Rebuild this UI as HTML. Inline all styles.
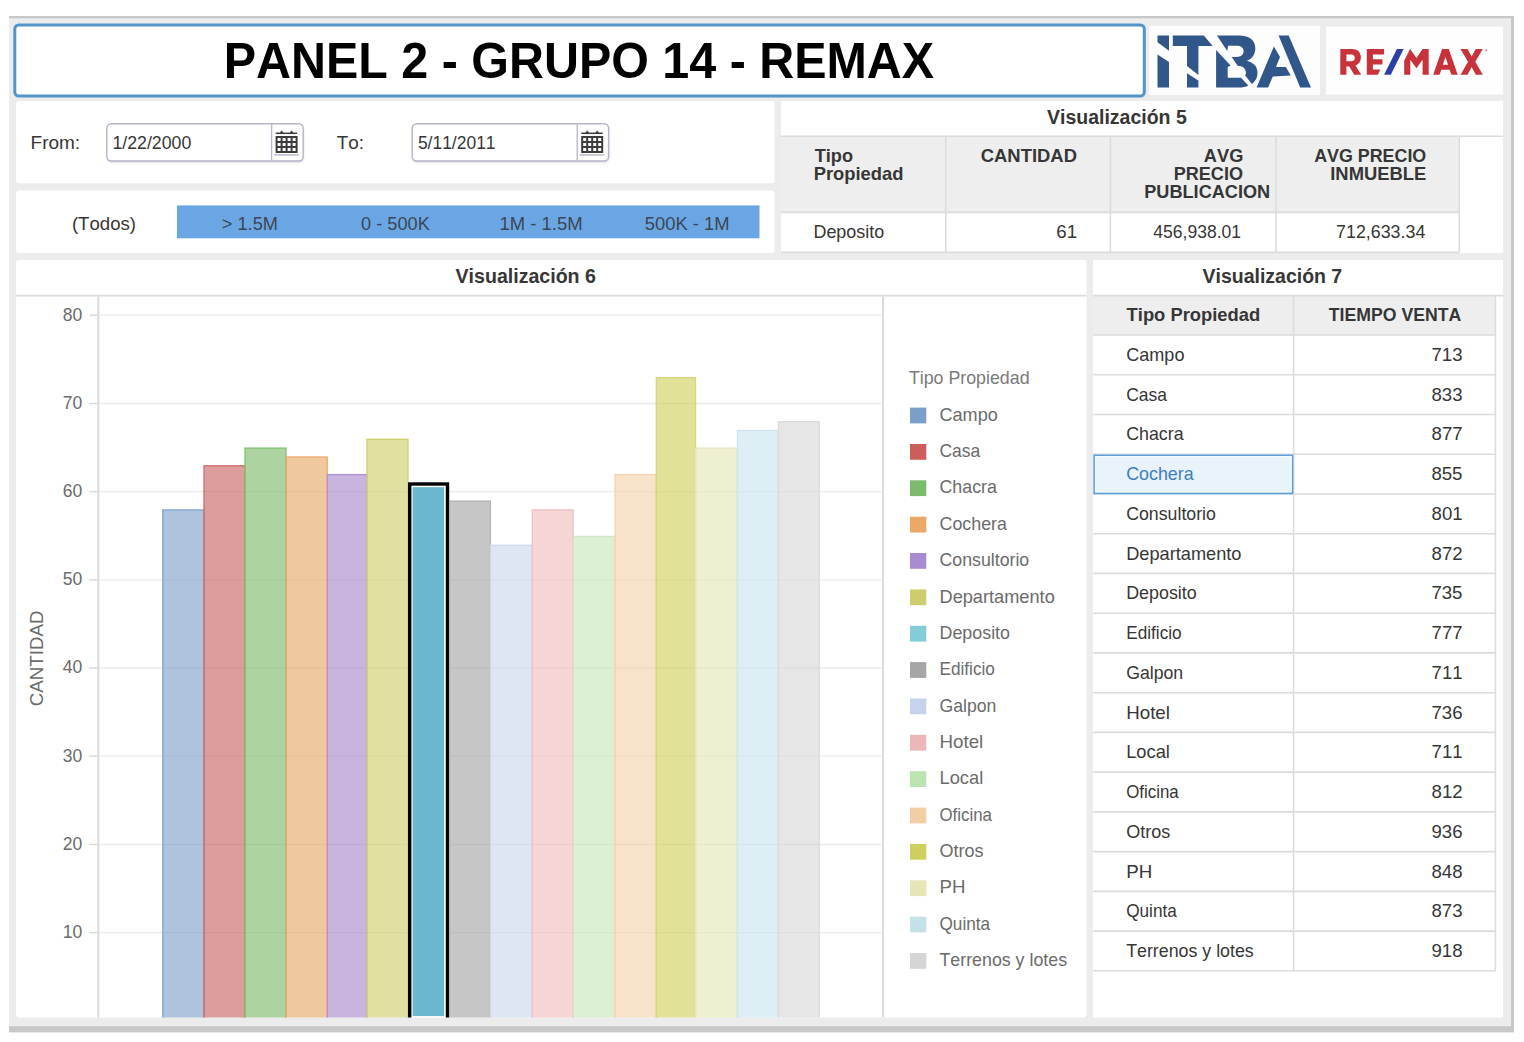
<!DOCTYPE html>
<html><head><meta charset="utf-8"><title>Panel 2 - Grupo 14 - REMAX</title>
<style>
html,body{margin:0;padding:0;background:#fff;}
body{width:1524px;height:1042px;overflow:hidden;font-family:"Liberation Sans",sans-serif;}
svg{display:block;position:absolute;left:0;top:0;}
svg text{font-family:"Liberation Sans",sans-serif;font-kerning:none;}
.b{font-weight:bold;}
</style></head><body>
<svg width="1524" height="1042" viewBox="0 0 1524 1042">
<defs><filter id="sh" x="-5%" y="-20%" width="110%" height="150%"><feGaussianBlur stdDeviation="1.2"/></filter></defs>
<rect x="9" y="16" width="1505" height="1016.4" fill="#c8c8c8"/>
<rect x="9" y="18.3" width="1502" height="1007.9" fill="#ececec"/>
<rect x="14.8" y="25" width="1129.5" height="71" rx="4" ry="4" fill="#fff" stroke="#5394ca" stroke-width="3"/>
<text class="b" x="223.76" y="78.30" font-size="50.2" fill="#000" textLength="710.37" lengthAdjust="spacingAndGlyphs">PANEL 2 - GRUPO 14 - REMAX</text>
<rect x="1149" y="26" width="171" height="69" fill="#fdfdfd"/>
<g fill="#31578a">
<path d="M1157.5 35.6H1169V50.8L1157.5 42.2Z"/>
<path d="M1157.5 54.6L1169 61.9V87.5H1157.5Z"/>
<path d="M1172.8 35.6H1203.8L1212.7 46H1172.8Z"/>
<path d="M1187 46H1198.4V74.9L1187 66Z"/>
<path d="M1187 73.3L1198.4 80.6V87.5H1187Z"/>
<path d="M1216.9 35.6H1238.9C1250 35.6 1255.3 41 1255.3 48.2C1255.3 54.5 1252 58.8 1246.8 60.8C1253.5 62.5 1257.5 66.5 1257.5 72.7C1257.5 77.5 1255.5 81.2 1251.9 83.9L1245 75.3C1246 74.3 1246.2 72.8 1245.7 71.3C1245 68 1242.5 65.9 1238.9 65.9H1237.8L1231.7 56.9H1236.7C1241 56.9 1243.6 54.8 1243.6 51.1C1243.6 47.6 1241 45.7 1236.7 45.7H1228L1227.3 51.1Z"/>
<path d="M1216.1 50L1230.6 65.5L1227.7 67V77.8H1241L1248.3 85.4C1245.8 86.8 1242.5 87.5 1238.9 87.5H1216.1Z"/>
<path d="M1273.9 46.4L1280 56.9L1276 67H1285.8L1290.8 75.6L1272.8 76.4L1268.1 87.5H1256.6Z"/>
<path d="M1278.6 35.6H1288.7L1311 87.5H1300.2Z"/>
</g>
<rect x="1326" y="26.7" width="177" height="68" fill="#fefefe"/>
<g fill="#c8323a">
<path fill-rule="evenodd" transform="translate(1340.3 49.1)" d="M0 0H11.5C17.3 0 20.6 3.4 20.6 8.5C20.6 12.4 18.5 15.2 15.2 16.4L20.9 25.7H13.9L9 17.3H6.1V25.7H0ZM6.1 5.3V12.1H11.2C13.3 12.1 14.5 10.7 14.5 8.7C14.5 6.6 13.3 5.3 11.2 5.3Z"/>
<path transform="translate(1366.8 49.1)" d="M0 0H17.3V5.4H6.1V10.2H15.6V15.4H6.1V20.3H13.5L11 25.7H0Z"/>
<path transform="translate(1404.2 49.1)" d="M5.9 0L12.3 9L18.4 0H24.5V25.7H18.4V10.6L12.3 19.2L6.1 10.6V25.7H0V11.5Z"/>
<path fill-rule="evenodd" transform="translate(1433.2 49.1)" d="M8.9 0H15.6L24.5 25.7H18.2L16.4 20.6H8.1L6.3 25.7H0ZM12.25 8L9.6 15.6H14.9Z"/>
<path transform="translate(1460.5 49.1)" d="M0 0H7L11.15 7.5L15.3 0H22.3L14.8 12.6L22.3 25.7H15.3L11.15 17.9L7 25.7H0L7.5 12.6Z"/>
<circle cx="1486.2" cy="50.3" r="1.1" fill="#d98a8e"/>
</g>
<path d="M1396.9 49.1H1403.6L1390.8 74.8H1384.1Z" fill="#2b3fa8"/>
<rect x="16" y="101" width="758.6" height="82.3" rx="3" fill="#fff"/>
<rect x="16" y="190.5" width="758.6" height="62.6" rx="3" fill="#fff"/>
<rect x="107.3" y="125" width="196.4" height="37.5" rx="4.5" fill="#c9c9cf" filter="url(#sh)" opacity="0.7"/>
<rect x="106.8" y="123.7" width="196.4" height="37.3" rx="4.5" fill="#fff" stroke="#b3b5cb" stroke-width="1.4"/>
<line x1="271.6" y1="124" x2="271.6" y2="160.8" stroke="#b9bbd0" stroke-width="1.4"/>
<g stroke="#3c3c3c" fill="none"><path d="M275.7 133.3H297.1" stroke-width="1.5"/><path d="M280.1 133L281.6 130.7L283.1 133ZM290.1 133L291.6 130.7L293.1 133Z" fill="#3c3c3c" stroke-width="0.6"/><path d="M276.6 136.0V152.8M281.6 136.0V152.8M286.6 136.0V152.8M291.6 136.0V152.8M296.6 136.0V152.8M275.7 136.9H297.5M275.7 141.9H297.5M275.7 146.9H297.5M275.7 151.9H297.5" stroke-width="2"/></g>
<line x1="274.2" y1="154.9" x2="298.8" y2="154.9" stroke="#babcd1" stroke-width="1.5"/>
<rect x="412.7" y="125" width="196.4" height="37.5" rx="4.5" fill="#c9c9cf" filter="url(#sh)" opacity="0.7"/>
<rect x="412.2" y="123.7" width="196.4" height="37.3" rx="4.5" fill="#fff" stroke="#b3b5cb" stroke-width="1.4"/>
<line x1="577.2" y1="124" x2="577.2" y2="160.8" stroke="#b9bbd0" stroke-width="1.4"/>
<g stroke="#3c3c3c" fill="none"><path d="M581.3 133.3H602.7" stroke-width="1.5"/><path d="M585.7 133L587.2 130.7L588.7 133ZM595.7 133L597.2 130.7L598.7 133Z" fill="#3c3c3c" stroke-width="0.6"/><path d="M582.2 136.0V152.8M587.2 136.0V152.8M592.2 136.0V152.8M597.2 136.0V152.8M602.2 136.0V152.8M581.3 136.9H603.1M581.3 141.9H603.1M581.3 146.9H603.1M581.3 151.9H603.1" stroke-width="2"/></g>
<line x1="579.8" y1="154.9" x2="604.4" y2="154.9" stroke="#babcd1" stroke-width="1.5"/>
<text x="30.54" y="148.90" font-size="18.6" fill="#363636" textLength="49.59" lengthAdjust="spacingAndGlyphs">From:</text>
<text x="112.45" y="148.90" font-size="18.6" fill="#363636" textLength="78.84" lengthAdjust="spacingAndGlyphs">1/22/2000</text>
<text x="336.78" y="148.90" font-size="18.6" fill="#363636" textLength="27.14" lengthAdjust="spacingAndGlyphs">To:</text>
<text x="417.90" y="148.90" font-size="18.6" fill="#363636" textLength="77.65" lengthAdjust="spacingAndGlyphs">5/11/2011</text>
<rect x="176.9" y="205.4" width="582.6" height="32.9" fill="#6ba6e4"/>
<text x="71.95" y="229.60" font-size="18.6" fill="#363636" textLength="64.00" lengthAdjust="spacingAndGlyphs">(Todos)</text>
<text x="221.80" y="229.60" font-size="18.6" fill="#3b4654" textLength="56.19" lengthAdjust="spacingAndGlyphs">&gt; 1.5M</text>
<text x="361.09" y="229.60" font-size="18.6" fill="#3b4654" textLength="68.71" lengthAdjust="spacingAndGlyphs">0 - 500K</text>
<text x="499.39" y="229.60" font-size="18.6" fill="#3b4654" textLength="83.33" lengthAdjust="spacingAndGlyphs">1M - 1.5M</text>
<text x="644.76" y="229.60" font-size="18.6" fill="#3b4654" textLength="84.95" lengthAdjust="spacingAndGlyphs">500K - 1M</text>
<rect x="781" y="101" width="722" height="152" fill="#fff"/>
<rect x="781" y="137" width="678.5" height="75.5" fill="#eeeeee"/>
<g stroke="#dcdcdc" stroke-width="1.6" fill="none"><path d="M781 136.3H1503M781 212.4H1459.5M781 252.4H1459.5M945.8 137V252.3M1110.4 137V252.3M1275.9 137V252.3M1459.3 137V252.3"/></g>
<text class="b" x="1046.97" y="124.00" font-size="20" fill="#363636" textLength="139.78" lengthAdjust="spacingAndGlyphs">Visualización 5</text>
<text class="b" x="814.70" y="162.30" font-size="18.6" fill="#363636" textLength="38.31" lengthAdjust="spacingAndGlyphs">Tipo</text>
<text class="b" x="813.67" y="180.30" font-size="18.6" fill="#363636" textLength="89.74" lengthAdjust="spacingAndGlyphs">Propiedad</text>
<text class="b" x="980.74" y="162.30" font-size="18.6" fill="#363636" textLength="96.23" lengthAdjust="spacingAndGlyphs">CANTIDAD</text>
<text class="b" x="1203.85" y="162.30" font-size="18.6" fill="#363636" textLength="39.48" lengthAdjust="spacingAndGlyphs">AVG</text>
<text class="b" x="1173.69" y="180.30" font-size="18.6" fill="#363636" textLength="69.27" lengthAdjust="spacingAndGlyphs">PRECIO</text>
<text class="b" x="1144.29" y="198.30" font-size="18.6" fill="#363636" textLength="125.83" lengthAdjust="spacingAndGlyphs">PUBLICACION</text>
<text class="b" x="1314.16" y="162.30" font-size="18.6" fill="#363636" textLength="112.09" lengthAdjust="spacingAndGlyphs">AVG PRECIO</text>
<text class="b" x="1330.27" y="180.30" font-size="18.6" fill="#363636" textLength="95.95" lengthAdjust="spacingAndGlyphs">INMUEBLE</text>
<text x="813.43" y="238.10" font-size="18.6" fill="#363636" textLength="70.83" lengthAdjust="spacingAndGlyphs">Deposito</text>
<text x="1056.35" y="238.10" font-size="18.6" fill="#363636" textLength="20.76" lengthAdjust="spacingAndGlyphs">61</text>
<text x="1153.30" y="238.10" font-size="18.6" fill="#363636" textLength="87.76" lengthAdjust="spacingAndGlyphs">456,938.01</text>
<text x="1336.09" y="238.10" font-size="18.6" fill="#363636" textLength="89.24" lengthAdjust="spacingAndGlyphs">712,633.34</text>
<rect x="16" y="260" width="1070.5" height="757.5" rx="3" fill="#fff"/>
<text class="b" x="455.57" y="283.00" font-size="20" fill="#363636" textLength="140.34" lengthAdjust="spacingAndGlyphs">Visualización 6</text>
<path d="M16 295.6H1086.5" stroke="#dcdcdc" stroke-width="1.8"/>
<g stroke="#dadada" stroke-width="1.5"><path d="M89.5 932.6H98.5"/><path d="M89.5 844.5H98.5"/><path d="M89.5 756.2H98.5"/><path d="M89.5 668.0H98.5"/><path d="M89.5 579.9H98.5"/><path d="M89.5 491.6H98.5"/><path d="M89.5 403.5H98.5"/><path d="M89.5 315.2H98.5"/><path d="M98.3 296.5V1017.5M883.1 296.5V1017.5" stroke="#dadada" stroke-width="2"/></g>
<text x="62.65" y="937.95" font-size="18.2" fill="#6b6b6b" textLength="19.54" lengthAdjust="spacingAndGlyphs">10</text>
<text x="62.65" y="849.75" font-size="18.2" fill="#6b6b6b" textLength="19.54" lengthAdjust="spacingAndGlyphs">20</text>
<text x="62.65" y="761.55" font-size="18.2" fill="#6b6b6b" textLength="19.54" lengthAdjust="spacingAndGlyphs">30</text>
<text x="62.65" y="673.35" font-size="18.2" fill="#6b6b6b" textLength="19.54" lengthAdjust="spacingAndGlyphs">40</text>
<text x="62.65" y="585.15" font-size="18.2" fill="#6b6b6b" textLength="19.54" lengthAdjust="spacingAndGlyphs">50</text>
<text x="62.65" y="496.95" font-size="18.2" fill="#6b6b6b" textLength="19.54" lengthAdjust="spacingAndGlyphs">60</text>
<text x="62.65" y="408.75" font-size="18.2" fill="#6b6b6b" textLength="19.54" lengthAdjust="spacingAndGlyphs">70</text>
<text x="62.65" y="320.55" font-size="18.2" fill="#6b6b6b" textLength="19.54" lengthAdjust="spacingAndGlyphs">80</text>
<g transform="translate(43.1 0) rotate(-90)"><text x="-706.25" y="0.00" font-size="18.6" fill="#6b6b6b" textLength="95.65" lengthAdjust="spacingAndGlyphs">CANTIDAD</text>
</g>
<g stroke="#ebebeb" stroke-width="1.3"><path d="M99.2 932.6H882.3"/><path d="M99.2 844.5H882.3"/><path d="M99.2 756.2H882.3"/><path d="M99.2 668.0H882.3"/><path d="M99.2 579.9H882.3"/><path d="M99.2 491.6H882.3"/><path d="M99.2 403.5H882.3"/><path d="M99.2 315.2H882.3"/></g>
<clipPath id="cc"><rect x="99" y="296" width="784" height="721.4"/></clipPath>
<g clip-path="url(#cc)">
<rect x="162.8" y="509.9" width="41.0" height="530.7" fill="#7b9eca" fill-opacity="0.62" stroke="#80a5cf" stroke-width="1.3"/>
<rect x="204.0" y="465.8" width="40.8" height="574.8" fill="#c76161" fill-opacity="0.62" stroke="#cf6d6d" stroke-width="1.3"/>
<rect x="245.0" y="448.1" width="41.0" height="592.5" fill="#7bba66" fill-opacity="0.62" stroke="#80c070" stroke-width="1.3"/>
<rect x="286.2" y="457.0" width="41.0" height="583.6" fill="#e7a661" fill-opacity="0.62" stroke="#eba96a" stroke-width="1.3"/>
<rect x="327.4" y="474.6" width="39.4" height="566.0" fill="#a686ca" fill-opacity="0.62" stroke="#b190d6" stroke-width="1.3"/>
<rect x="367.0" y="439.3" width="41.0" height="601.3" fill="#cdcd66" fill-opacity="0.62" stroke="#cfcf70" stroke-width="1.3"/>
<rect x="409.7" y="484.0" width="37.8" height="557.2" fill="#fff" stroke="#000" stroke-width="3.4"/><rect x="412.6" y="487.2" width="31.5" height="528.9" fill="#6bb7cf"/>
<rect x="449.6" y="501.1" width="40.8" height="539.5" fill="#a3a3a3" fill-opacity="0.62" stroke="#b2b2b2" stroke-width="1.3"/>
<rect x="490.6" y="545.2" width="41.5" height="495.4" fill="#cad5ec" fill-opacity="0.62" stroke="#cfd9ec" stroke-width="1.3"/>
<rect x="532.3" y="509.9" width="40.8" height="530.7" fill="#f0bbbb" fill-opacity="0.62" stroke="#efc0c1" stroke-width="1.3"/>
<rect x="573.3" y="536.4" width="41.5" height="504.2" fill="#c7e7b8" fill-opacity="0.62" stroke="#cde8c2" stroke-width="1.3"/>
<rect x="615.0" y="474.6" width="41.1" height="566.0" fill="#f4d2aa" fill-opacity="0.62" stroke="#f3d4b2" stroke-width="1.3"/>
<rect x="656.3" y="377.6" width="39.2" height="663.0" fill="#d0cf59" fill-opacity="0.62" stroke="#d6d47c" stroke-width="1.3"/>
<rect x="695.7" y="448.1" width="41.5" height="592.5" fill="#e5e5b5" fill-opacity="0.62" stroke="#e6e6c0" stroke-width="1.3"/>
<rect x="737.4" y="430.5" width="40.8" height="610.1" fill="#c8e4ed" fill-opacity="0.62" stroke="#cde6ee" stroke-width="1.3"/>
<rect x="778.4" y="421.7" width="40.8" height="618.9" fill="#d7d7d7" fill-opacity="0.62" stroke="#dadada" stroke-width="1.3"/>
</g>
<text x="908.90" y="383.60" font-size="18.6" fill="#7a7a7a" textLength="120.65" lengthAdjust="spacingAndGlyphs">Tipo Propiedad</text>
<rect x="910" y="407.6" width="16.3" height="15.8" fill="#7a9fca"/><text x="939.50" y="420.70" font-size="18.6" fill="#6b6b6b" textLength="58.28" lengthAdjust="spacingAndGlyphs">Campo</text>
<rect x="910" y="444.0" width="16.3" height="15.8" fill="#cd5d5d"/><text x="939.50" y="457.06" font-size="18.6" fill="#6b6b6b" textLength="40.79" lengthAdjust="spacingAndGlyphs">Casa</text>
<rect x="910" y="480.3" width="16.3" height="15.8" fill="#7cbb6c"/><text x="939.50" y="493.42" font-size="18.6" fill="#6b6b6b" textLength="57.40" lengthAdjust="spacingAndGlyphs">Chacra</text>
<rect x="910" y="516.7" width="16.3" height="15.8" fill="#eba867"/><text x="939.50" y="529.78" font-size="18.6" fill="#6b6b6b" textLength="67.41" lengthAdjust="spacingAndGlyphs">Cochera</text>
<rect x="910" y="553.0" width="16.3" height="15.8" fill="#a78bd0"/><text x="939.50" y="566.14" font-size="18.6" fill="#6b6b6b" textLength="89.75" lengthAdjust="spacingAndGlyphs">Consultorio</text>
<rect x="910" y="589.4" width="16.3" height="15.8" fill="#cdcd6f"/><text x="939.50" y="602.50" font-size="18.6" fill="#6b6b6b" textLength="115.26" lengthAdjust="spacingAndGlyphs">Departamento</text>
<rect x="910" y="625.8" width="16.3" height="15.8" fill="#85ccd9"/><text x="939.50" y="638.86" font-size="18.6" fill="#6b6b6b" textLength="70.52" lengthAdjust="spacingAndGlyphs">Deposito</text>
<rect x="910" y="662.1" width="16.3" height="15.8" fill="#a6a6a6"/><text x="939.50" y="675.22" font-size="18.6" fill="#6b6b6b" textLength="55.43" lengthAdjust="spacingAndGlyphs">Edificio</text>
<rect x="910" y="698.5" width="16.3" height="15.8" fill="#c7d3ec"/><text x="939.50" y="711.58" font-size="18.6" fill="#6b6b6b" textLength="56.93" lengthAdjust="spacingAndGlyphs">Galpon</text>
<rect x="910" y="734.8" width="16.3" height="15.8" fill="#edb6b9"/><text x="939.50" y="747.94" font-size="18.6" fill="#6b6b6b" textLength="43.79" lengthAdjust="spacingAndGlyphs">Hotel</text>
<rect x="910" y="771.2" width="16.3" height="15.8" fill="#bee3b2"/><text x="939.50" y="784.30" font-size="18.6" fill="#6b6b6b" textLength="43.72" lengthAdjust="spacingAndGlyphs">Local</text>
<rect x="910" y="807.6" width="16.3" height="15.8" fill="#f3cea5"/><text x="939.50" y="820.66" font-size="18.6" fill="#6b6b6b" textLength="52.50" lengthAdjust="spacingAndGlyphs">Oficina</text>
<rect x="910" y="843.9" width="16.3" height="15.8" fill="#cfcf60"/><text x="939.50" y="857.02" font-size="18.6" fill="#6b6b6b" textLength="44.00" lengthAdjust="spacingAndGlyphs">Otros</text>
<rect x="910" y="880.3" width="16.3" height="15.8" fill="#e5e5b5"/><text x="939.50" y="893.38" font-size="18.6" fill="#6b6b6b" textLength="25.96" lengthAdjust="spacingAndGlyphs">PH</text>
<rect x="910" y="916.6" width="16.3" height="15.8" fill="#c4e1ea"/><text x="939.50" y="929.74" font-size="18.6" fill="#6b6b6b" textLength="50.61" lengthAdjust="spacingAndGlyphs">Quinta</text>
<rect x="910" y="953.0" width="16.3" height="15.8" fill="#d5d5d5"/><text x="939.50" y="966.10" font-size="18.6" fill="#6b6b6b" textLength="127.54" lengthAdjust="spacingAndGlyphs">Terrenos y lotes</text>
<rect x="1093" y="260" width="410" height="757.5" fill="#fff"/>
<text class="b" x="1202.57" y="283.00" font-size="20" fill="#363636" textLength="139.59" lengthAdjust="spacingAndGlyphs">Visualización 7</text>
<rect x="1093" y="296" width="402.5" height="39" fill="#eeeeee"/>
<path d="M1093 295.6H1503M1093 335.0H1495.6M1093 374.7H1495.6M1093 414.5H1495.6M1093 454.2H1495.6M1093 494.0H1495.6M1093 533.7H1495.6M1093 573.4H1495.6M1093 613.2H1495.6M1093 652.9H1495.6M1093 692.7H1495.6M1093 732.4H1495.6M1093 772.1H1495.6M1093 811.9H1495.6M1093 851.6H1495.6M1093 891.4H1495.6M1093 931.1H1495.6M1093 970.8H1495.6M1293.6 296V970.8M1495.4 296V970.8" stroke="#dcdcdc" stroke-width="1.6" fill="none"/>
<text class="b" x="1126.59" y="321.40" font-size="18.6" fill="#363636" textLength="133.62" lengthAdjust="spacingAndGlyphs">Tipo Propiedad</text>
<text class="b" x="1328.80" y="321.40" font-size="18.6" fill="#363636" textLength="132.46" lengthAdjust="spacingAndGlyphs">TIEMPO VENTA</text>
<text x="1126.20" y="360.90" font-size="18.6" fill="#363636" textLength="58.28" lengthAdjust="spacingAndGlyphs">Campo</text>
<text x="1431.48" y="360.90" font-size="18.6" fill="#363636" textLength="31.03" lengthAdjust="spacingAndGlyphs">713</text>
<text x="1126.20" y="400.64" font-size="18.6" fill="#363636" textLength="40.79" lengthAdjust="spacingAndGlyphs">Casa</text>
<text x="1431.48" y="400.64" font-size="18.6" fill="#363636" textLength="31.03" lengthAdjust="spacingAndGlyphs">833</text>
<text x="1126.20" y="440.38" font-size="18.6" fill="#363636" textLength="57.40" lengthAdjust="spacingAndGlyphs">Chacra</text>
<text x="1431.60" y="440.38" font-size="18.6" fill="#363636" textLength="31.03" lengthAdjust="spacingAndGlyphs">877</text>
<rect x="1094.2" y="455.4" width="198.3" height="38.0" fill="#e8f3fc" stroke="#5d9edb" stroke-width="1.7"/><rect x="1095.4" y="456.5" width="195.8" height="35.3" fill="none" stroke="#f6fbff" stroke-width="1"/><text x="1126.20" y="480.12" font-size="18.6" fill="#3f7fbd" textLength="67.41" lengthAdjust="spacingAndGlyphs">Cochera</text>
<text x="1431.45" y="480.12" font-size="18.6" fill="#363636" textLength="31.03" lengthAdjust="spacingAndGlyphs">855</text>
<text x="1126.20" y="519.86" font-size="18.6" fill="#363636" textLength="89.75" lengthAdjust="spacingAndGlyphs">Consultorio</text>
<text x="1431.57" y="519.86" font-size="18.6" fill="#363636" textLength="31.03" lengthAdjust="spacingAndGlyphs">801</text>
<text x="1126.20" y="559.60" font-size="18.6" fill="#363636" textLength="115.26" lengthAdjust="spacingAndGlyphs">Departamento</text>
<text x="1431.60" y="559.60" font-size="18.6" fill="#363636" textLength="31.03" lengthAdjust="spacingAndGlyphs">872</text>
<text x="1126.20" y="599.34" font-size="18.6" fill="#363636" textLength="70.52" lengthAdjust="spacingAndGlyphs">Deposito</text>
<text x="1431.45" y="599.34" font-size="18.6" fill="#363636" textLength="31.03" lengthAdjust="spacingAndGlyphs">735</text>
<text x="1126.20" y="639.08" font-size="18.6" fill="#363636" textLength="55.43" lengthAdjust="spacingAndGlyphs">Edificio</text>
<text x="1431.60" y="639.08" font-size="18.6" fill="#363636" textLength="31.03" lengthAdjust="spacingAndGlyphs">777</text>
<text x="1126.20" y="678.82" font-size="18.6" fill="#363636" textLength="56.93" lengthAdjust="spacingAndGlyphs">Galpon</text>
<text x="1431.57" y="678.82" font-size="18.6" fill="#363636" textLength="31.03" lengthAdjust="spacingAndGlyphs">711</text>
<text x="1126.20" y="718.56" font-size="18.6" fill="#363636" textLength="43.79" lengthAdjust="spacingAndGlyphs">Hotel</text>
<text x="1431.48" y="718.56" font-size="18.6" fill="#363636" textLength="31.03" lengthAdjust="spacingAndGlyphs">736</text>
<text x="1126.20" y="758.30" font-size="18.6" fill="#363636" textLength="43.72" lengthAdjust="spacingAndGlyphs">Local</text>
<text x="1431.57" y="758.30" font-size="18.6" fill="#363636" textLength="31.03" lengthAdjust="spacingAndGlyphs">711</text>
<text x="1126.20" y="798.04" font-size="18.6" fill="#363636" textLength="52.50" lengthAdjust="spacingAndGlyphs">Oficina</text>
<text x="1431.60" y="798.04" font-size="18.6" fill="#363636" textLength="31.03" lengthAdjust="spacingAndGlyphs">812</text>
<text x="1126.20" y="837.78" font-size="18.6" fill="#363636" textLength="44.00" lengthAdjust="spacingAndGlyphs">Otros</text>
<text x="1431.48" y="837.78" font-size="18.6" fill="#363636" textLength="31.03" lengthAdjust="spacingAndGlyphs">936</text>
<text x="1126.20" y="877.52" font-size="18.6" fill="#363636" textLength="25.96" lengthAdjust="spacingAndGlyphs">PH</text>
<text x="1431.48" y="877.52" font-size="18.6" fill="#363636" textLength="31.03" lengthAdjust="spacingAndGlyphs">848</text>
<text x="1126.20" y="917.26" font-size="18.6" fill="#363636" textLength="50.61" lengthAdjust="spacingAndGlyphs">Quinta</text>
<text x="1431.48" y="917.26" font-size="18.6" fill="#363636" textLength="31.03" lengthAdjust="spacingAndGlyphs">873</text>
<text x="1126.20" y="957.00" font-size="18.6" fill="#363636" textLength="127.54" lengthAdjust="spacingAndGlyphs">Terrenos y lotes</text>
<text x="1431.47" y="957.00" font-size="18.6" fill="#363636" textLength="31.03" lengthAdjust="spacingAndGlyphs">918</text>
</svg>
</body></html>
